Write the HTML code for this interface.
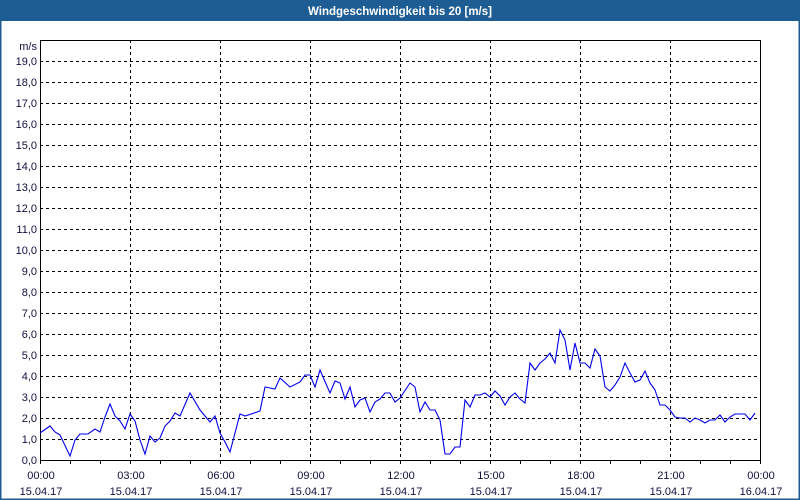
<!DOCTYPE html>
<html><head><style>
html,body{margin:0;padding:0;width:800px;height:500px;overflow:hidden;background:#fff;}
svg{display:block;}
text{font-family:"Liberation Sans",sans-serif;font-size:11px;fill:#101040;}
</style></head><body>
<svg width="800" height="500" viewBox="0 0 800 500" xmlns="http://www.w3.org/2000/svg">
<rect x="0" y="0" width="800" height="500" fill="#1d5d93"/>
<rect x="1.5" y="21" width="797" height="477.5" fill="#fff"/>
<text x="400" y="15" text-anchor="middle" style="fill:#fff;font-weight:bold;font-size:11.5px">Windgeschwindigkeit bis 20 [m/s]</text>
<g stroke="#000" stroke-width="1" stroke-dasharray="3,3" fill="none" shape-rendering="crispEdges">
<path d="M40 439.5H760M40 418.5H760M40 397.5H760M40 376.5H760M40 355.5H760M40 334.5H760M40 313.5H760M40 292.5H760M40 271.5H760M40 250.5H760M40 229.5H760M40 208.5H760M40 187.5H760M40 166.5H760M40 145.5H760M40 124.5H760M40 103.5H760M40 82.5H760M40 61.5H760"/>
<path d="M130.5 40V460M220.5 40V460M310.5 40V460M400.5 40V460M490.5 40V460M580.5 40V460M670.5 40V460"/>
</g>
<g stroke="#000" stroke-width="1" fill="none" shape-rendering="crispEdges">
<rect x="40.5" y="40.5" width="720" height="420"/>
<path d="M70.5 460V464M100.5 460V464M130.5 460V464M160.5 460V464M190.5 460V464M220.5 460V464M250.5 460V464M280.5 460V464M310.5 460V464M340.5 460V464M370.5 460V464M400.5 460V464M430.5 460V464M460.5 460V464M490.5 460V464M520.5 460V464M550.5 460V464M580.5 460V464M610.5 460V464M640.5 460V464M670.5 460V464M700.5 460V464M730.5 460V464M40.5 460V464M760.5 460V464"/>
</g>
<g text-anchor="end">
<text x="37" y="50">m/s</text>
<text x="37" y="65">19,0</text><text x="37" y="86">18,0</text><text x="37" y="107">17,0</text><text x="37" y="128">16,0</text><text x="37" y="149">15,0</text><text x="37" y="170">14,0</text><text x="37" y="191">13,0</text><text x="37" y="212">12,0</text><text x="37" y="233">11,0</text><text x="37" y="254">10,0</text><text x="37" y="275">9,0</text><text x="37" y="296">8,0</text><text x="37" y="317">7,0</text><text x="37" y="338">6,0</text><text x="37" y="359">5,0</text><text x="37" y="380">4,0</text><text x="37" y="401">3,0</text><text x="37" y="422">2,0</text><text x="37" y="443">1,0</text><text x="37" y="464">0,0</text>
</g>
<g text-anchor="middle">
<text x="41" y="479">00:00</text><text x="41" y="495">15.04.17</text>
<text x="131" y="479">03:00</text><text x="131" y="495">15.04.17</text>
<text x="221" y="479">06:00</text><text x="221" y="495">15.04.17</text>
<text x="311" y="479">09:00</text><text x="311" y="495">15.04.17</text>
<text x="401" y="479">12:00</text><text x="401" y="495">15.04.17</text>
<text x="491" y="479">15:00</text><text x="491" y="495">15.04.17</text>
<text x="581" y="479">18:00</text><text x="581" y="495">15.04.17</text>
<text x="671" y="479">21:00</text><text x="671" y="495">15.04.17</text>
<text x="761" y="479">00:00</text><text x="761" y="495">16.04.17</text>
</g>
<polyline fill="none" stroke="#0000ee" stroke-width="1.1" points="40,433 50,426 55,432 60,435 70,456 75,440 80,434 88,434 95,429 100,432 105,417 110,404 115,416 120,421 125,429 130,414 135,421 140,440 145,454 150,436 155,442 160,438 165,426 170,421 175,413 180,416 190,393 200,410 210,422 215,416 220,433 225,442 230,452 240,414 245,416 260,411 265,387 275,389 280,378 290,387 300,382 305,375 310,375 315,387 320,370 330,393 335,381 340,383 345,399 350,387 355,407 360,400 365,398 370,412 375,402 380,399 385,393 390,393 395,402 400,398 410,383 415,387 420,412 425,402 430,410 435,410 440,420 445,454 450,454 455,447 460,447 465,400 470,407 475,395 480,395 485,393 490,397 495,391 500,396 505,405 510,397 515,393 520,399 525,403 530,363 535,370 540,363 545,359 550,353 555,363 560,330 565,340 570,370 575,343 580,363 585,363 590,368 595,349 600,356 605,387 610,391 615,385 620,377 625,363 630,373 635,382 640,380 645,371 650,383 655,390 660,405 665,405 670,410 675,417 680,418 685,418 690,422 695,418 700,420 705,423 710,420 715,420 720,415 725,422 730,417 735,414 740,414 745,414 750,420 755,413"/>
</svg>
</body></html>
